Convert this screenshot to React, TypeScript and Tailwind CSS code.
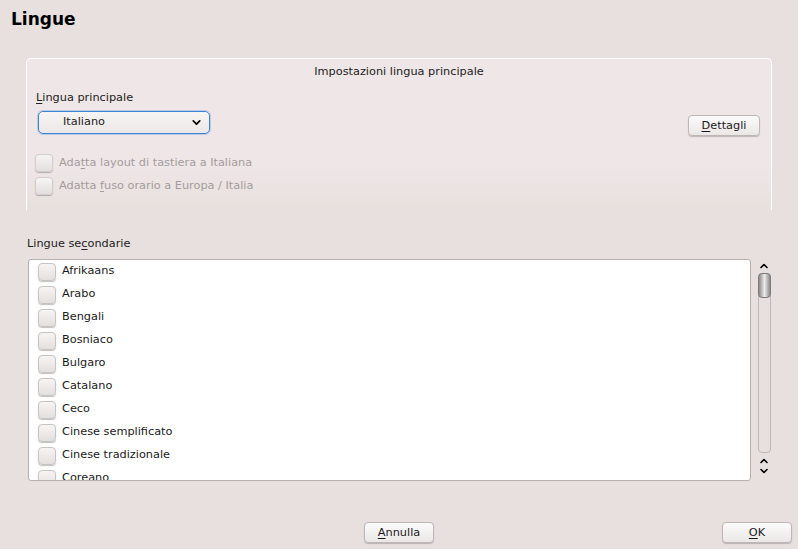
import { ChevronDown, ChevronUp } from "lucide-react";

const langs = [
  "Afrikaans",
  "Arabo",
  "Bengali",
  "Bosniaco",
  "Bulgaro",
  "Catalano",
  "Ceco",
  "Cinese semplificato",
  "Cinese tradizionale",
  "Coreano",
];

function Box({ disabled }: { disabled?: boolean }) {
  return (
    <span
      className={
        "inline-block w-[18px] h-[18px] rounded-[4px] border shrink-0 bg-gradient-to-b from-[#f7f4f4] to-[#e4dfdf] shadow-[0_1px_1px_rgba(0,0,0,0.25)] " +
        (disabled ? "border-[#d4cdcd]" : "border-[#c9c2c2]")
      }
    />
  );
}

function Btn({ label, u, w }: { label: string; u: number; w: string }) {
  return (
    <button
      className={
        "h-[21px] rounded-[4px] border border-[#bdb6b6] bg-gradient-to-b from-[#fbfafa] to-[#ebe7e7] shadow-[0_1px_1px_rgba(0,0,0,0.2)] text-[11.3px] text-[#1a1a1a] leading-none " +
        w
      }
    >
      {label.slice(0, u)}
      <span className="underline underline-offset-2">{label[u]}</span>
      {label.slice(u + 1)}
    </button>
  );
}

export default function App() {
  return (
    <div className="w-[798px] h-[549px] bg-[#e7e0de] text-[11.3px] text-[#222] font-['DejaVu_Sans',sans-serif] flex flex-col overflow-hidden">
      <h1 className="pl-[11px] pt-[7px] text-[17px] font-bold text-black leading-[24px]">
        Lingue
      </h1>

      <div className="mt-[27px] ml-[26px] w-[746px] h-[152px] rounded-t-[5px] border-t border-l border-r border-white bg-gradient-to-b from-[#efe6e7] via-[#efe6e7] via-70% to-[#e7e1dd] relative">
        <div className="text-center pt-[5px] leading-[15px]">Impostazioni lingua principale</div>
        <div className="pl-[9px] mt-[11px] leading-[15px]">
          <span className="underline underline-offset-2">L</span>ingua principale
        </div>
        <div className="flex items-start mt-[6px]">
          <div className="ml-[11px] w-[172px] h-[23px] rounded-[5px] border border-[#3d84d6] bg-gradient-to-b from-[#f7f4f4] to-[#ece8e8] flex items-center pl-[24px] pr-[6px] shadow-[0_0_0_1px_rgba(90,150,220,0.35)]">
            <span className="flex-1">Italiano</span>
            <ChevronDown size={13} strokeWidth={3.2} className="text-black" />
          </div>
          <div className="ml-auto mr-[11px] mt-[4px]">
            <Btn label="Dettagli" u={0} w="w-[72px]" />
          </div>
        </div>
        <div className="mt-[18px] pl-[8px] flex flex-col gap-[5px] text-[#a39c9c]">
          <div className="flex items-center gap-[6px] h-[18px]">
            <Box disabled />
            <span>
              Ada<span className="underline underline-offset-2">t</span>ta layout di tastiera a Italiana
            </span>
          </div>
          <div className="flex items-center gap-[6px] h-[18px]">
            <Box disabled />
            <span>
              Adatta <span className="underline underline-offset-2">f</span>uso orario a Europa / Italia
            </span>
          </div>
        </div>
      </div>

      <div className="mt-[26px] pl-[27px] leading-[15px]">
        Lingue se<span className="underline underline-offset-2">c</span>ondarie
      </div>

      <div className="flex mt-[8px] ml-[28px]">
        <div className="w-[723px] h-[222px] bg-white border border-[#b7b0b0] rounded-[3px] overflow-hidden">
          {langs.map((l) => (
            <div key={l} className="flex items-center h-[23px] pl-[9px] gap-[6px] leading-none">
              <Box />
              <span className="text-[#1a1a1a] -mt-[2px]">{l}</span>
            </div>
          ))}
        </div>
        <div className="ml-[5px] w-[16px] flex flex-col items-center">
          <ChevronUp size={12} strokeWidth={3.2} className="mt-[1px] text-black" />
          <div className="mt-[1px] w-[13px] h-[180px] border border-[#bfb8b8] rounded-[4px] relative">
            <div className="absolute -left-[1px] -top-[1px] w-[13px] h-[25px] rounded-[4px] border border-[#7f7a7a] bg-gradient-to-r from-[#8d8989] via-[#ececec] to-[#8d8989]" />
          </div>
          <ChevronUp size={12} strokeWidth={3.2} className="mt-[2px] text-black" />
          <ChevronDown size={12} strokeWidth={3.2} className="-mt-[2px] text-black" />
        </div>
      </div>

      <div className="flex items-center mt-[41px]">
        <div className="ml-[364px]">
          <Btn label="Annulla" u={0} w="w-[70px]" />
        </div>
        <div className="ml-auto mr-[6px]">
          <Btn label="OK" u={0} w="w-[70px]" />
        </div>
      </div>
    </div>
  );
}
